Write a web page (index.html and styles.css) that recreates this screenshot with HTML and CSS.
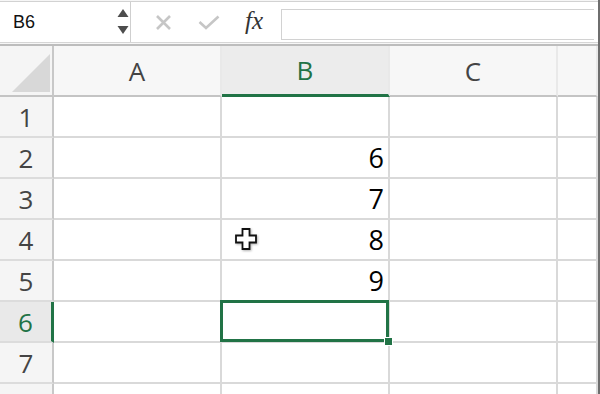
FILE: index.html
```html
<!DOCTYPE html>
<html lang="en">
<head>
<meta charset="UTF-8">
<meta name="viewport" content="width=device-width, initial-scale=1.0">
<title>Sheet</title>
<link rel="stylesheet" href="styles.css">
</head>
<body>
<div class="app">
    <div class="formula-bar">
        <div class="name-box">
            <span class="name">B6</span>
            <svg class="spin" width="12" height="26" viewBox="0 0 12 26">
                <path d="M6 0 L11.5 8 L0.5 8 Z" fill="#4d4d4d"/>
                <path d="M0.5 17 L11.5 17 L6 25 Z" fill="#4d4d4d"/>
            </svg>
        </div>
        <div class="bar-tools">
            <svg class="icon-cancel" width="17" height="17" viewBox="0 0 17 17">
                <path d="M2 2 L15 15 M15 2 L2 15" stroke="#c6c6c6" stroke-width="2.6" fill="none"/>
            </svg>
            <svg class="icon-enter" width="22" height="15" viewBox="0 0 22 15">
                <path d="M1.5 7 L8 13 L20.5 1.5" stroke="#c6c6c6" stroke-width="2.6" fill="none"/>
            </svg>
            <span class="fx">fx</span>
        </div>
        <div class="formula-input"></div>
    </div>

    <div class="sheet">
        <div class="corner"></div>
        <div class="col-head">A</div>
        <div class="col-head active">B</div>
        <div class="col-head">C</div>
        <div class="col-head"></div>

        <div class="row-head">1</div>
        <div class="cell"></div><div class="cell"></div><div class="cell"></div><div class="cell"></div>

        <div class="row-head">2</div>
        <div class="cell"></div><div class="cell num">6</div><div class="cell"></div><div class="cell"></div>

        <div class="row-head">3</div>
        <div class="cell"></div><div class="cell num">7</div><div class="cell"></div><div class="cell"></div>

        <div class="row-head">4</div>
        <div class="cell"></div>
        <div class="cell num">8
            <svg class="pointer" width="24" height="24" viewBox="0 0 24 24">
                <path d="M8.5 2 H15.5 V8.5 H22 V15.5 H15.5 V22 H8.5 V15.5 H2 V8.5 H8.5 Z" fill="#fff" stroke="#111" stroke-width="1.8"/>
            </svg>
        </div>
        <div class="cell"></div><div class="cell"></div>

        <div class="row-head">5</div>
        <div class="cell"></div><div class="cell num">9</div><div class="cell"></div><div class="cell"></div>

        <div class="row-head active">6</div>
        <div class="cell"></div><div class="cell selected"></div><div class="cell"></div><div class="cell"></div>

        <div class="row-head">7</div>
        <div class="cell"></div><div class="cell"></div><div class="cell"></div><div class="cell"></div>

        <div class="row-head"></div>
        <div class="cell"></div><div class="cell"></div><div class="cell"></div><div class="cell"></div>
    </div>
</div>
</body>
</html>
```

FILE: styles.css
```css
body {
    margin: 0;
    background-color: #fff;
}
.app {
    width: 600px;
    height: 394px;
    overflow: hidden;
    box-sizing: border-box;
    border-right: 2px solid #6e6e6e;
    background-color: #f6f6f6;
    padding-top: 1px;
}
.formula-bar {
    display: flex;
    height: 42px;
    box-sizing: border-box;
    background-color: #fff;
    border-top: 1px solid #d2d2d2;
    border-bottom: 1px solid #d6d6d6;
}
.name-box {
    width: 131px;
    box-sizing: border-box;
    display: flex;
    align-items: center;
    padding-left: 13px;
    padding-right: 1px;
    border-right: 1px solid #cfcfcf;
}
.name {
    font-family: "Liberation Sans", Arial, sans-serif;
    font-size: 18px;
    color: #111;
}
.spin {
    margin-left: auto;
}
.bar-tools {
    width: 150px;
    display: flex;
    align-items: center;
}
.icon-cancel {
    margin-left: 24px;
}
.icon-enter {
    margin-left: 26px;
}
.fx {
    margin-left: 25px;
    margin-top: -2px;
    font-family: "Liberation Serif", "Times New Roman", serif;
    font-style: italic;
    font-size: 25px;
    color: #333;
}
.formula-input {
    flex: 1;
    margin: 7px 4px 0 0;
    height: 31px;
    box-sizing: border-box;
    background-color: #fff;
    border: 1px solid #d2d2d2;
    border-right: none;
}
.sheet {
    display: grid;
    grid-template-columns: 54px 168px 168px 168px 1fr;
    grid-template-rows: 51px;
    grid-auto-rows: 41px;
    margin-top: 1px;
    border-top: 2px solid #bdbdbd;
    background-color: #fff;
    font-family: "Open Sans", "Liberation Sans", sans-serif;
}
.corner,
.col-head,
.row-head,
.cell {
    box-sizing: border-box;
}
.corner {
    position: relative;
    background-color: #f5f5f5;
    border-right: 2px solid #c8c8c8;
    border-bottom: 2px solid #c4c4c4;
}
.corner::after {
    content: "";
    position: absolute;
    left: 12px;
    top: 8px;
    width: 38px;
    height: 38px;
    background-color: #d8d8d8;
    clip-path: polygon(0 100%, 100% 0, 100% 100%);
}
.col-head {
    display: flex;
    align-items: center;
    justify-content: center;
    background-color: #f7f7f7;
    border-right: 2px solid #e9e9e9;
    border-bottom: 2px solid #c4c4c4;
    font-size: 26px;
    color: #444;
}
.col-head.active {
    background-color: #ececec;
    color: #217346;
    border-bottom: 3px solid #217346;
}
.row-head {
    display: flex;
    align-items: center;
    justify-content: center;
    background-color: #f5f5f5;
    border-right: 2px solid #c8c8c8;
    border-bottom: 2px solid #dcdcdc;
    font-size: 26px;
    color: #444;
}
.row-head.active {
    background-color: #e9e9e9;
    color: #217346;
    border-right: 3px solid #217346;
}
.cell {
    position: relative;
    border-right: 2px solid #d9d9d9;
    border-bottom: 2px solid #d9d9d9;
}
.num {
    display: flex;
    align-items: center;
    justify-content: flex-end;
    padding-right: 4px;
    font-size: 27px;
    color: #000;
}
.selected::after {
    content: "";
    position: absolute;
    left: -2px;
    top: -2px;
    right: -1px;
    bottom: -1px;
    border: 3px solid #217346;
}
.selected::before {
    content: "";
    position: absolute;
    right: -5px;
    bottom: -5px;
    width: 7px;
    height: 7px;
    background-color: #217346;
    border: 1px solid #fff;
    z-index: 1;
}
.pointer {
    position: absolute;
    left: 12px;
    top: 7px;
    filter: drop-shadow(1px 1px 1px rgba(0, 0, 0, 0.3));
}
```
